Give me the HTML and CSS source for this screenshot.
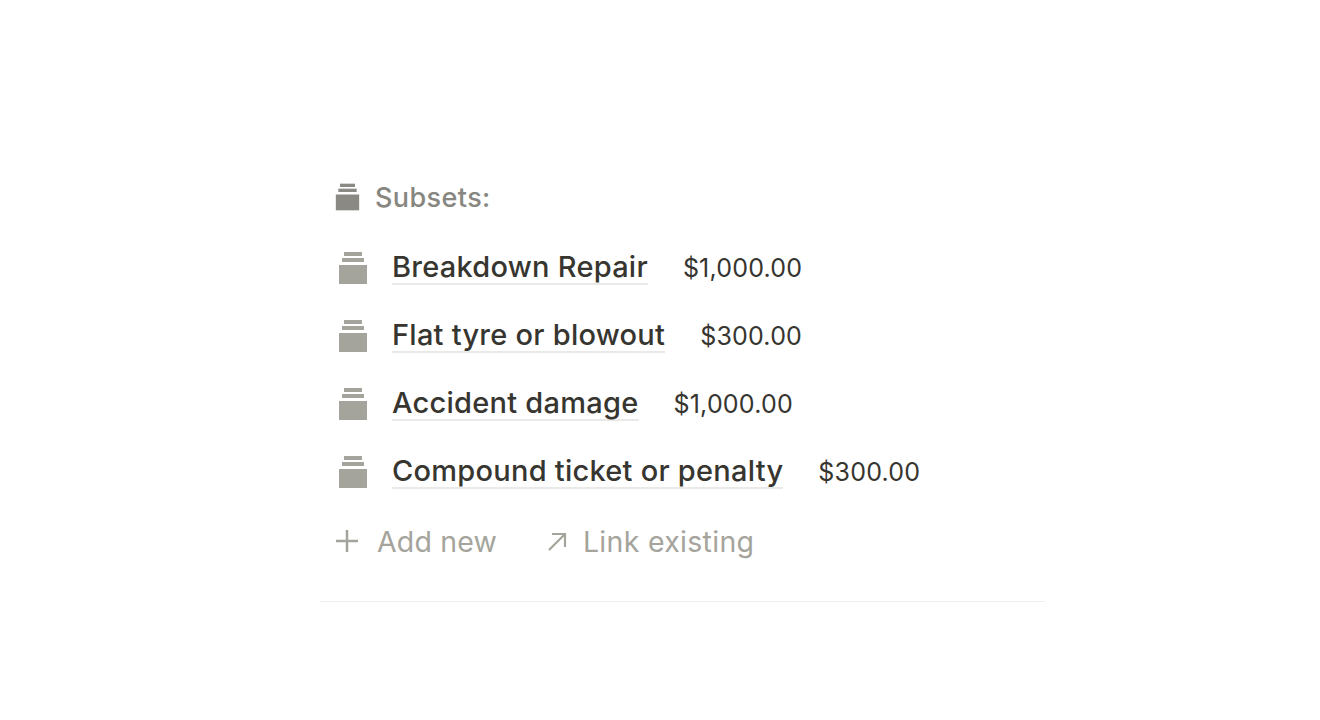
FILE: index.html
```html
<!DOCTYPE html>
<html lang="en">
<head>
    <meta charset="UTF-8">
    <title>Subsets</title>
    <link rel="stylesheet" href="styles.css">
</head>
<body>
    <svg width="0" height="0" class="defs">
        <symbol id="stack" viewBox="0 0 30 32">
            <rect x="6" y="0" width="18" height="4"/>
            <rect x="4" y="6" width="22" height="4"/>
            <rect x="1" y="13" width="28" height="19"/>
        </symbol>
    </svg>

    <section class="panel">
        <div class="heading">
            <svg class="heading-icon"><use href="#stack"/></svg>
            <span>Subsets:</span>
        </div>

        <ul class="subsets">
            <li class="subset">
                <svg class="subset-icon"><use href="#stack"/></svg>
                <a class="subset-name">Breakdown Repair</a>
                <span class="subset-price">$1,000.00</span>
            </li>
            <li class="subset">
                <svg class="subset-icon"><use href="#stack"/></svg>
                <a class="subset-name">Flat tyre or blowout</a>
                <span class="subset-price">$300.00</span>
            </li>
            <li class="subset">
                <svg class="subset-icon"><use href="#stack"/></svg>
                <a class="subset-name">Accident damage</a>
                <span class="subset-price">$1,000.00</span>
            </li>
            <li class="subset">
                <svg class="subset-icon"><use href="#stack"/></svg>
                <a class="subset-name">Compound ticket or penalty</a>
                <span class="subset-price">$300.00</span>
            </li>
        </ul>

        <div class="actions">
            <span class="action">
                <svg class="action-icon" viewBox="0 0 24 24"><path d="M12 1V23M1 12H23"/></svg>
                Add new
            </span>
            <span class="action link">
                <svg class="action-icon small" viewBox="0 0 20 20"><path d="M2 19L18 3M5 3H18V16"/></svg>
                Link existing
            </span>
        </div>
    </section>
</body>
</html>
```

FILE: styles.css
```css
body {
    margin: 0;
    background: #fff;
    font-family: Inter, "Liberation Sans", sans-serif;
}

.defs {
    display: block;
    position: absolute;
}

.panel {
    width: 725px;
    margin-left: 320px;
    padding: 179px 0 0 15px;
    box-sizing: border-box;
    height: 602px;
    border-bottom: 1px solid #efefed;
}

.heading {
    display: flex;
    align-items: center;
    height: 36px;
    font-size: 27px;
    font-weight: 500;
    letter-spacing: 0.4px;
    color: #87867f;
}

.heading-icon {
    width: 25px;
    height: 28px;
    margin-right: 15px;
    fill: #8a8983;
}

.subsets {
    list-style: none;
    margin: 19px 0 0;
    padding: 0;
}

.subset {
    display: flex;
    align-items: center;
    height: 68px;
}

.subset-icon {
    width: 30px;
    height: 32px;
    margin: 0 24px 0 3px;
    fill: #a5a49c;
}

.subset-name {
    font-size: 29px;
    font-weight: 500;
    letter-spacing: 0.25px;
    color: #37352f;
    border-bottom: 2px solid #e9e9e7;
    line-height: 32px;
}

.subset-price {
    margin-left: 35px;
    font-size: 25px;
    letter-spacing: 0.2px;
    color: #37352f;
}

.actions {
    display: flex;
    align-items: center;
    height: 70px;
    font-size: 28.5px;
    letter-spacing: 0.15px;
    color: #a5a49c;
}

.action {
    display: flex;
    align-items: center;
}

.link {
    margin-left: 50px;
    letter-spacing: 0.3px;
}

.action-icon {
    width: 24px;
    height: 24px;
    margin-right: 18px;
    fill: none;
    stroke: #a5a49c;
    stroke-width: 2.5;
}

.action-icon.small {
    width: 20px;
    height: 20px;
    margin-right: 16px;
    stroke-width: 2.2;
}
```
